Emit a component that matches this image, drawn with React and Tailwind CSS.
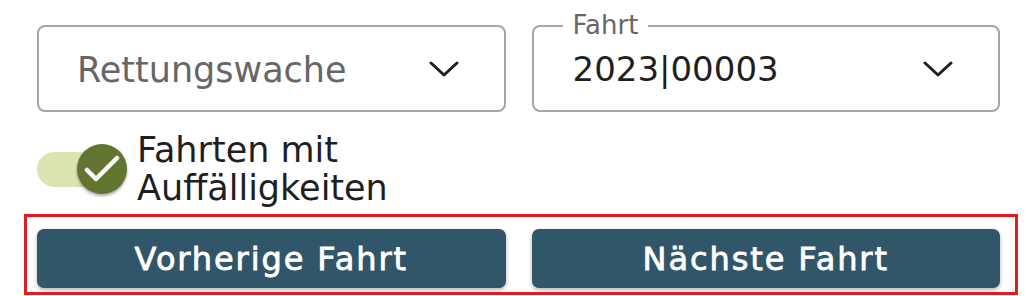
import React from 'react';

const Chevron = () => (
    <svg width="30" height="18" viewBox="0 0 30 18" fill="none" stroke="#1f1f1f" strokeWidth="3" strokeLinecap="round" strokeLinejoin="round">
        <path d="M2 3 L15 15 L28 3" />
    </svg>
);

const App = () => {
    return (
        <div className="w-[1026px] h-[296px] bg-white overflow-hidden" style={{ fontFamily: '"DejaVu Sans", Inter, sans-serif' }}>
            <div className="pl-[37px] pr-[26px] pt-[25px]">
                <div className="grid grid-cols-2 gap-[26px]">
                    <div className="h-[87px] border-2 border-[#a6a6a6] rounded-[8px] flex items-center justify-between pl-[38px] pr-[45px]">
                        <span className="text-[35px] text-[#666666] leading-none pt-[4px]">Rettungswache</span>
                        <Chevron />
                    </div>
                    <div className="relative h-[87px] border-2 border-[#a6a6a6] rounded-[8px] flex items-center justify-between pl-[39px] pr-[45px]">
                        <span className="absolute left-[29px] -top-[16px] bg-white px-[10px] text-[26px] leading-[28px] text-[#666666]">Fahrt</span>
                        <span className="text-[34px] text-[#1f1f1f] leading-none">2023|00003</span>
                        <Chevron />
                    </div>
                </div>

                <div className="flex items-center mt-[19px] mb-[7px] h-[76px]">
                    <div className="relative w-[90px] h-[50px] flex items-center">
                        <div className="w-[85px] h-[35px] rounded-full bg-[#d9e4b1]" />
                        <div className="absolute left-[40px] top-0 w-[50px] h-[50px] rounded-full bg-[#627530] shadow-[0_2px_3px_rgba(0,0,0,0.35)] flex items-center justify-center">
                            <svg width="36" height="28" viewBox="0 0 36 28" fill="none" stroke="white" strokeWidth="4.5" strokeLinecap="round" strokeLinejoin="round">
                                <path d="M3 15 L12 24 L33 3" />
                            </svg>
                        </div>
                    </div>
                    <div className="ml-[10px] text-[35px] leading-[38px] text-[#1f1f1f]">
                        Fahrten mit<br />Auffälligkeiten
                    </div>
                </div>

                <div className="-ml-[13px] -mr-[18px] border-[3px] border-[#e41b23] pt-[12px] pb-[4px] pl-[10px] pr-[15px]">
                    <div className="grid grid-cols-2 gap-[26px]">
                        <button className="h-[59px] rounded-[7px] bg-[#31566a] text-white text-[32px] leading-none tracking-[1.9px] shadow-[0_2px_4px_rgba(0,0,0,0.3)]" style={{ WebkitTextStroke: '0.8px white' }}>
                            Vorherige Fahrt
                        </button>
                        <button className="h-[59px] rounded-[7px] bg-[#31566a] text-white text-[32px] leading-none tracking-[1.9px] shadow-[0_2px_4px_rgba(0,0,0,0.3)]" style={{ WebkitTextStroke: '0.8px white' }}>
                            Nächste Fahrt
                        </button>
                    </div>
                </div>
            </div>
        </div>
    );
};

export default App;
